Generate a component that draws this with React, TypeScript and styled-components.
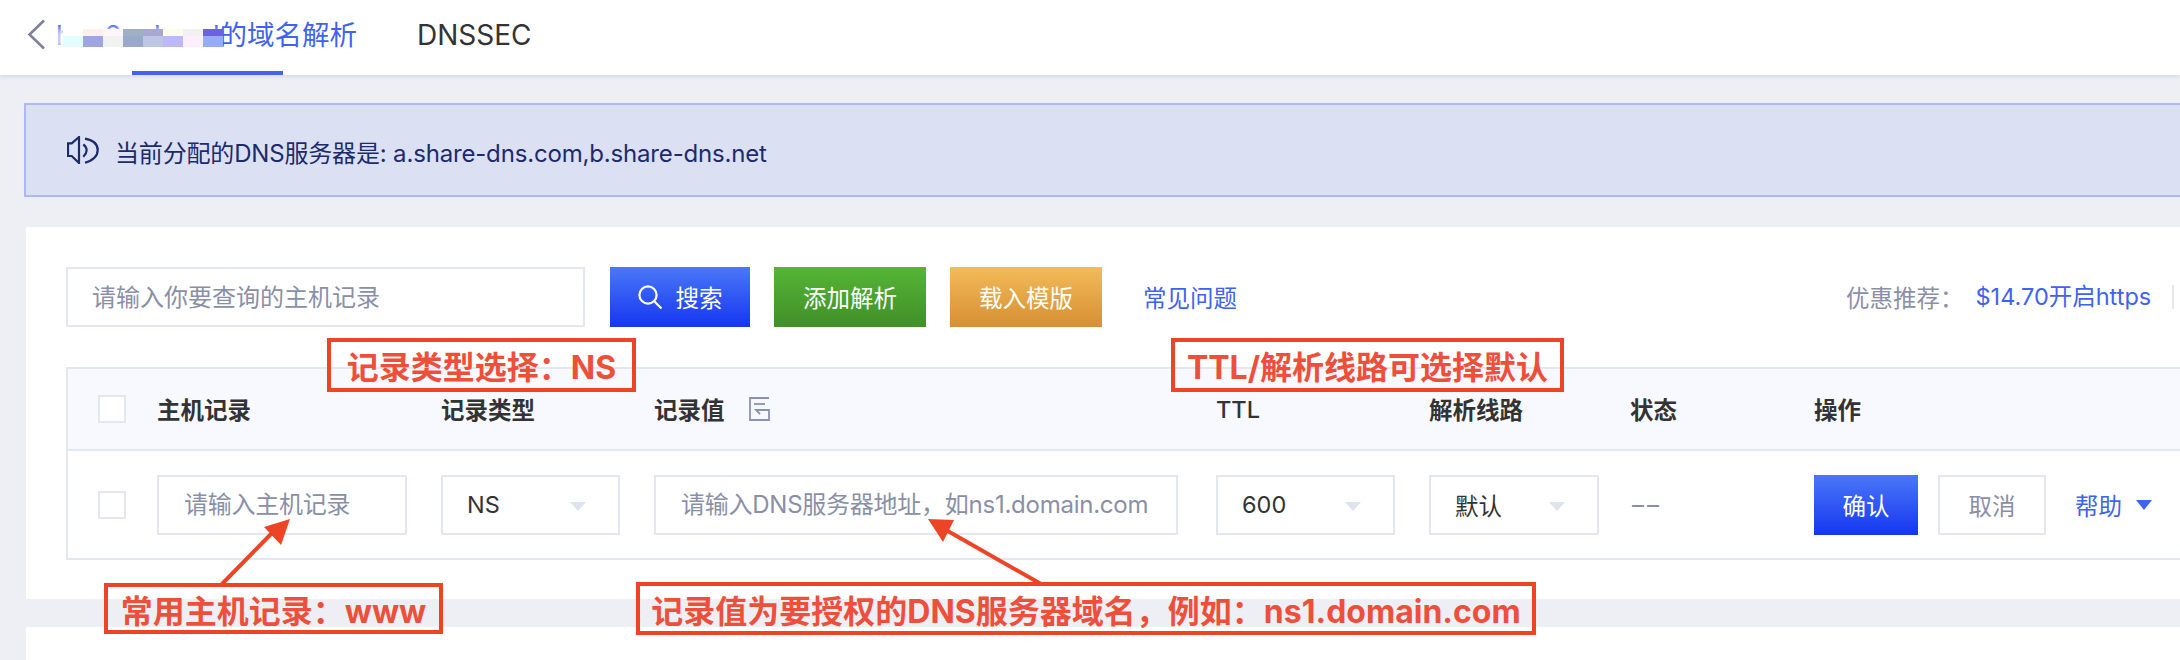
import React from "react";
import styled, { createGlobalStyle } from "styled-components";

const FONT = `Inter, 'Noto Sans CJK SC', sans-serif`;
const LINE = "#e3e7f2";
const RED = "#ee4426";
const BLUE = "#3f63f0";
const MUTED = "#8a8fa8";

const Global = createGlobalStyle`
  html, body { margin: 0; padding: 0; background: #eeeff5; }
  body { font-family: ${FONT}; overflow: hidden; }
  * { box-sizing: border-box; }
`;

const Page = styled.div`
  position: relative;
  width: 2180px;
  height: 660px;
  overflow: hidden;
  background: #eeeff5;
`;

const Header = styled.header`
  position: relative;
  display: flex;
  align-items: center;
  height: 75px;
  padding-left: 27px;
  background: #fff;
  box-shadow: 0 2px 3px rgba(200, 205, 220, 0.6);
`;

const Back = styled.svg`
  width: 19px;
  height: 31px;
  margin-top: -6px;
  flex: none;
`;

const TitleTab = styled.div`
  display: flex;
  justify-content: space-between;
  margin-left: 10px;
  margin-top: -5px;
  width: 301px;
  font-size: 27.5px;
  line-height: 32px;
  color: ${BLUE};
  white-space: pre;
`;

const TabBar = styled.span`
  position: absolute;
  left: 132px;
  bottom: 0;
  width: 151px;
  height: 4px;
  background: #4263f2;
`;

const PlainTab = styled.div`
  margin-left: 60px;
  margin-top: -6px;
  font-size: 28px;
  line-height: 32px;
  color: #333;
`;

const Mosaic = styled.div`
  position: absolute;
  left: 63px;
  top: 29px;
  display: grid;
  grid-template-columns: repeat(8, 20px);
  grid-template-rows: 7px 11px;
  box-shadow: -6px 0 6px rgba(255, 255, 255, 0.9);
`;

const Tile = styled.i<{ $c: string }>`
  background: ${(p) => p.$c};
`;

const Notice = styled.div`
  display: flex;
  align-items: center;
  height: 94px;
  margin: 28px -4px 0 24px;
  padding-left: 41px;
  background: #dce0f3;
  border: 2px solid #adb9f4;
  color: #1c2a6e;
  font-size: 24px;
  letter-spacing: -0.17px;
`;

const NoticeText = styled.span`
  margin-left: 16px;
  margin-top: 2px;
`;

const Panel = styled.section`
  height: 372px;
  margin: 30px 0 0 26px;
  padding: 40px 0 0 40px;
  background: #fff;
  overflow: hidden;
`;

const Toolbar = styled.div`
  display: flex;
  align-items: center;
  height: 60px;
`;

const SearchInput = styled.input`
  width: 519px;
  height: 60px;
  padding: 0 24px;
  border: 2px solid ${LINE};
  outline: none;
  background: #fff;
  font: 24px ${FONT};
  &::placeholder { color: ${MUTED}; opacity: 1; }
`;

const grads: Record<string, string> = {
  blue: "linear-gradient(#4a78f7, #1536f0)",
  green: "linear-gradient(#55b535, #418f29)",
  orange: "linear-gradient(#f3bb5a, #d68f33)",
};

const Button = styled.button<{ $tone: string; $w: number; $ml: number }>`
  display: flex;
  align-items: center;
  justify-content: center;
  gap: 14px;
  flex: none;
  width: ${(p) => p.$w}px;
  height: 60px;
  margin-left: ${(p) => p.$ml}px;
  padding: 0;
  border: 0;
  background: ${(p) => grads[p.$tone]};
  color: #fff;
  font: 23.5px ${FONT};
`;

const FaqLink = styled.a`
  margin-left: 41px;
  color: ${BLUE};
  font-size: 23.5px;
`;

const Promo = styled.div`
  display: flex;
  align-items: center;
  margin-left: 609px;
  font-size: 23.5px;
  color: ${MUTED};
  white-space: nowrap;
`;

const PromoLink = styled.a`
  margin-left: 12px;
  color: ${BLUE};
  padding-right: 21px;
  border-right: 2px solid ${LINE};
  line-height: 24px;
`;

const Table = styled.div`
  margin: 40px -8px 0 0;
  border: 2px solid ${LINE};
`;

const COLS = "59px 284px 213px 562px 213px 201px 184px 1fr";

const HeadRow = styled.div`
  display: grid;
  grid-template-columns: ${COLS};
  align-items: center;
  height: 82px;
  padding: 0 0 0 30px;
  background: #f8f9fe;
  border-bottom: 2px solid ${LINE};
`;

const HeadCell = styled.div<{ $plain?: boolean }>`
  display: flex;
  align-items: center;
  gap: 24px;
  font-size: 23.5px;
  font-weight: ${(p) => (p.$plain ? 500 : 700)};
  color: #333;
`;

const Check = styled.span`
  display: block;
  width: 28px;
  height: 28px;
  background: #fff;
  border: 2px solid ${LINE};
`;

const BodyRow = styled.div`
  display: grid;
  grid-template-columns: ${COLS};
  align-items: center;
  height: 107px;
  padding: 0 0 0 30px;
`;

const CellInput = styled.input<{ $w: number }>`
  display: block;
  width: ${(p) => p.$w}px;
  height: 60px;
  padding: 0 0 0 25px;
  border: 2px solid ${LINE};
  outline: none;
  background: #fff;
  font: 24px ${FONT};
  letter-spacing: -0.25px;
  &::placeholder { color: ${MUTED}; opacity: 1; }
`;

const Select = styled.div<{ $w: number }>`
  position: relative;
  display: flex;
  align-items: center;
  width: ${(p) => p.$w}px;
  height: 60px;
  padding-left: 24px;
  border: 2px solid ${LINE};
  font-size: 23.5px;
  color: #333;
  &::after {
    content: "";
    position: absolute;
    right: 32px;
    top: 25px;
    border-left: 8px solid transparent;
    border-right: 8px solid transparent;
    border-top: 9px solid #dfe3ee;
  }
`;

const Dash = styled.span`
  font-size: 24px;
  letter-spacing: 3px;
  color: ${MUTED};
  margin-left: 2px;
`;

const Actions = styled.div`
  display: flex;
  align-items: center;
`;

const GhostButton = styled.button`
  width: 108px;
  height: 60px;
  margin-left: 20px;
  border: 2px solid ${LINE};
  background: #fff;
  color: ${MUTED};
  font: 23.5px ${FONT};
`;

const HelpLink = styled.a`
  display: flex;
  align-items: center;
  margin-left: 29px;
  color: ${BLUE};
  font-size: 23.5px;
  white-space: nowrap;
  &::after {
    content: "";
    margin-left: 14px;
    border-left: 8px solid transparent;
    border-right: 8px solid transparent;
    border-top: 10px solid ${BLUE};
  }
`;

const LowerPanel = styled.section`
  height: 40px;
  margin: 28px 0 0 26px;
  background: #fff;
`;

const Callout = styled.div<{ $l: number; $t: number; $w: number; $h: number }>`
  position: absolute;
  left: ${(p) => p.$l}px;
  top: ${(p) => p.$t}px;
  width: ${(p) => p.$w}px;
  height: ${(p) => p.$h}px;
  display: flex;
  align-items: center;
  justify-content: center;
  border: 4px solid ${RED};
  color: #ee4f3b;
  font-size: 32px;
  font-weight: 700;
  white-space: nowrap;
`;

const Arrows = styled.svg`
  position: absolute;
  left: 0;
  top: 0;
  pointer-events: none;
`;

const SearchIcon = () => (
  <svg width="24" height="24" viewBox="0 0 24 24" fill="none" stroke="#fff" strokeWidth="2.2">
    <circle cx="10" cy="10" r="8.6" />
    <path d="M16.5 16.5 23.5 23.5" />
  </svg>
);

const tiles = [
  "#ffffff", "#fdf0ea", "#fff5fb", "#9fb0c0", "#a7a9d3", "#fbfdeb", "#f1f1f4", "#6a62e0",
  "#e3fdff", "#9ea5e0", "#f0f4f0", "#9aa8cb", "#bec6e6", "#bcb8fa", "#fdeefe", "#96acf8",
];

export default function App() {
  return (
    <Page>
      <Global />
      <Header>
        <Back viewBox="0 0 19 31" fill="none" stroke="#7d8299" strokeWidth="2.6">
          <path d="M17 1.5 2.5 15.5 17 29.5" />
        </Back>
        <TitleTab>
          <span>h</span>
          <span>2</span>
          <span>h</span>
          <span>d的域名解析</span>
        </TitleTab>
        <PlainTab>DNSSEC</PlainTab>
        <TabBar />
        <Mosaic>
          {tiles.map((c, i) => (
            <Tile key={i} $c={c} />
          ))}
        </Mosaic>
      </Header>

      <Notice>
        <svg width="32" height="28" viewBox="0 0 32 28" fill="none" stroke="#1c2a6e" strokeWidth="2.2">
          <path d="M12 1 4.7 7.3H1V20H4.7L12 27Z" />
          <path d="M16.3 8.3Q23 14 16.3 20.7" />
          <path d="M18 2.7Q30.7 5 30.7 14T18 26.7" />
        </svg>
        <NoticeText>当前分配的DNS服务器是: a.share-dns.com,b.share-dns.net</NoticeText>
      </Notice>

      <Panel>
        <Toolbar>
          <SearchInput placeholder="请输入你要查询的主机记录" />
          <Button $tone="blue" $w={140} $ml={25}>
            <SearchIcon />
            搜索
          </Button>
          <Button $tone="green" $w={152} $ml={24}>添加解析</Button>
          <Button $tone="orange" $w={152} $ml={24}>载入模版</Button>
          <FaqLink>常见问题</FaqLink>
          <Promo>
            优惠推荐：
            <PromoLink>$14.70开启https</PromoLink>
          </Promo>
        </Toolbar>

        <Table>
          <HeadRow>
            <Check />
            <HeadCell>主机记录</HeadCell>
            <HeadCell>记录类型</HeadCell>
            <HeadCell>
              记录值
              <svg width="21" height="24" viewBox="0 0 21 24" fill="none" stroke="#8a92ae" strokeWidth="1.8">
                <path d="M20 1H1V23H20V13H7L11 17" />
                <path d="M5 7H16" />
              </svg>
            </HeadCell>
            <HeadCell $plain>TTL</HeadCell>
            <HeadCell>解析线路</HeadCell>
            <HeadCell>状态</HeadCell>
            <HeadCell>操作</HeadCell>
          </HeadRow>
          <BodyRow>
            <Check />
            <CellInput $w={250} placeholder="请输入主机记录" />
            <Select $w={179}>NS</Select>
            <CellInput $w={524} placeholder="请输入DNS服务器地址，如ns1.domain.com" />
            <Select $w={179}>600</Select>
            <Select $w={170}>默认</Select>
            <Dash>––</Dash>
            <Actions>
              <Button $tone="blue" $w={104} $ml={0}>确认</Button>
              <GhostButton>取消</GhostButton>
              <HelpLink>帮助</HelpLink>
            </Actions>
          </BodyRow>
        </Table>
      </Panel>

      <LowerPanel />

      <Callout $l={327} $t={338} $w={309} $h={54}>记录类型选择：NS</Callout>
      <Callout $l={1171} $t={338} $w={393} $h={54}>TTL/解析线路可选择默认</Callout>
      <Callout $l={104} $t={583} $w={339} $h={51}>常用主机记录：www</Callout>
      <Callout $l={636} $t={582} $w={900} $h={53}>记录值为要授权的DNS服务器域名，例如：ns1.domain.com</Callout>

      <Arrows width="2180" height="660">
        <path d="M222 584 272 533" stroke={RED} strokeWidth="4" />
        <path d="M290 519 264 527 281 545Z" fill={RED} />
        <path d="M1041 584 946 530" stroke={RED} strokeWidth="4" />
        <path d="M928 519 954 520 943 542Z" fill={RED} />
      </Arrows>
    </Page>
  );
}
